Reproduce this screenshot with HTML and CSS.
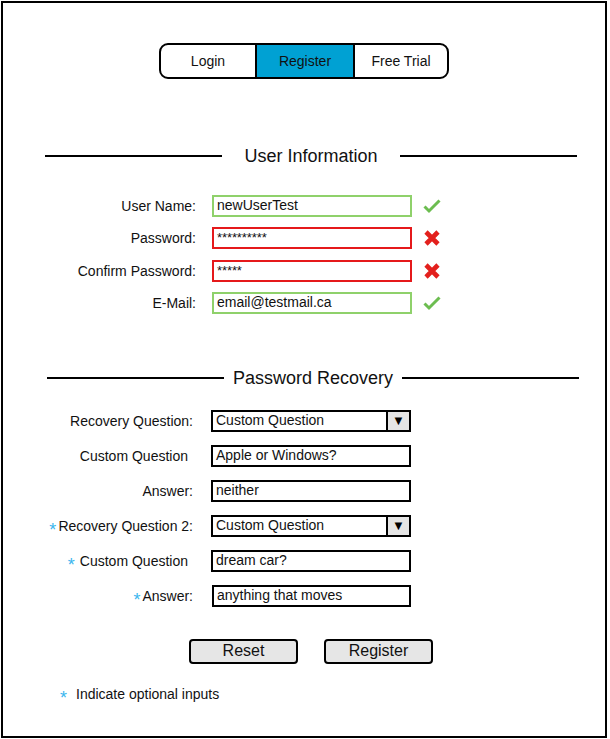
FILE: index.html
```html
<!DOCTYPE html>
<html>
<head>
<meta charset="utf-8">
<link rel="stylesheet" href="styles.css">
</head>
<body>
<div class="frame">
  <div class="tabs">
    <div class="tab tab-login">Login</div>
    <div class="tab tab-register">Register</div>
    <div class="tab tab-trial">Free Trial</div>
  </div>

  <div class="section-head head-user">
    <span class="rule"></span>
    <span class="head-text">User Information</span>
    <span class="rule"></span>
  </div>

  <div class="rows rows-user">
    <div class="row">
      <div class="label">User Name:</div>
      <div class="field ok">newUserTest</div>
      <svg class="icon" width="18" height="16" viewBox="0 0 18 16"><polyline points="1.5,8.5 6,13 16.5,2.5" fill="none" stroke="#6cbd50" stroke-width="3"/></svg>
    </div>
    <div class="row">
      <div class="label">Password:</div>
      <div class="field bad"><span class="stars">**********</span></div>
      <svg class="icon" width="18" height="16" viewBox="0 0 18 16"><path d="M3 2 L15 14 M15 2 L3 14" stroke="#e3201d" stroke-width="4.6"/></svg>
    </div>
    <div class="row">
      <div class="label">Confirm Password:</div>
      <div class="field bad"><span class="stars">*****</span></div>
      <svg class="icon" width="18" height="16" viewBox="0 0 18 16"><path d="M3 2 L15 14 M15 2 L3 14" stroke="#e3201d" stroke-width="4.6"/></svg>
    </div>
    <div class="row">
      <div class="label">E-Mail:</div>
      <div class="field ok">email@testmail.ca</div>
      <svg class="icon" width="18" height="16" viewBox="0 0 18 16"><polyline points="1.5,8.5 6,13 16.5,2.5" fill="none" stroke="#6cbd50" stroke-width="3"/></svg>
    </div>
  </div>

  <div class="section-head head-recovery">
    <span class="rule"></span>
    <span class="head-text">Password Recovery</span>
    <span class="rule"></span>
  </div>

  <div class="rows rows-recovery">
    <div class="row row-r">
      <div class="label">Recovery Question:</div>
      <div class="field plain select"><span class="sel-text">Custom Question</span><span class="sel-btn">&#9660;</span></div>
    </div>
    <div class="row row-r">
      <div class="label nocolon">Custom Question</div>
      <div class="field plain">Apple or Windows?</div>
    </div>
    <div class="row row-r">
      <div class="label">Answer:</div>
      <div class="field plain">neither</div>
    </div>
    <div class="row row-r">
      <div class="label"><span class="opt">*</span>Recovery Question 2:</div>
      <div class="field plain select"><span class="sel-text">Custom Question</span><span class="sel-btn">&#9660;</span></div>
    </div>
    <div class="row row-r">
      <div class="label nocolon"><span class="opt opt-sp">*</span>Custom Question</div>
      <div class="field plain">dream car?</div>
    </div>
    <div class="row row-r">
      <div class="label"><span class="opt">*</span>Answer:</div>
      <div class="field plain shift">anything that moves</div>
    </div>
  </div>

  <div class="actions">
    <div class="btn">Reset</div>
    <div class="btn">Register</div>
  </div>

  <div class="note"><span class="opt note-star">*</span>Indicate optional inputs</div>
</div>
</body>
</html>
```

FILE: styles.css
```css
html, body {
  margin: 0;
  padding: 0;
  background: #fff;
}
body {
  font-family: "Liberation Sans", Arial, sans-serif;
  color: #111;
  font-size: 14px;
}
.frame {
  box-sizing: border-box;
  margin: 1px 0 0 1px;
  width: 606px;
  height: 737px;
  border: 2px solid #000;
  padding-top: 40px;
}
.tabs {
  display: flex;
  box-sizing: border-box;
  width: 290px;
  height: 36px;
  margin: 0 auto;
  border: 2px solid #000;
  border-radius: 9px;
  overflow: hidden;
}
.tab {
  box-sizing: border-box;
  display: flex;
  align-items: center;
  justify-content: center;
  font-size: 14px;
  color: #111;
}
.tab-login { width: 94px; }
.tab-register {
  width: 100px;
  background: #00a1d3;
  border-left: 2px solid #000;
  border-right: 2px solid #000;
}
.tab-trial { width: 92px; }

.section-head {
  display: flex;
  align-items: center;
  width: 532px;
  height: 20px;
}
.head-user { margin: 67px 0 0 42px; }
.head-recovery { margin: 54px 0 0 44px; }
.rule {
  width: 177px;
  height: 2px;
  background: #000;
}
.head-text {
  flex: 1;
  text-align: center;
  font-size: 18px;
  line-height: 20px;
  color: #111;
}

.rows {
  display: flex;
  flex-direction: column;
}
.rows-user {
  margin-top: 29px;
  gap: 10.33px;
}
.rows-recovery {
  margin-top: 22px;
  gap: 13px;
}
.row {
  display: flex;
  align-items: center;
  height: 22px;
}
.label {
  box-sizing: border-box;
  width: 193px;
  text-align: right;
  white-space: nowrap;
  font-size: 14px;
  line-height: 16px;
  color: #111;
}
.row-r .label { width: 190px; }
.label.nocolon { padding-right: 5px; }
.field {
  box-sizing: border-box;
  width: 200px;
  height: 22px;
  margin-left: 16px;
  border: 2px solid #000;
  padding: 0 3px;
  font-size: 14px;
  line-height: 17px;
  white-space: nowrap;
  color: #111;
}
.row-r .field { margin-left: 18px; }
.row-r .field.shift { margin-left: 19px; width: 199px; }
.field.ok { border-color: #8fd16b; }
.field.bad { border-color: #e5191b; }
.stars {
  font-size: 13px;
  letter-spacing: -0.1px;
}
.icon {
  margin-left: 11px;
  flex: none;
}
.select {
  display: flex;
  padding-right: 0;
}
.sel-text { flex: 1; }
.sel-btn {
  box-sizing: border-box;
  width: 23px;
  height: 18px;
  background: #e5e5e5;
  border-left: 2px solid #000;
  font-size: 13px;
  line-height: 18px;
  text-align: center;
  color: #000;
}
.opt {
  color: #3bb6ee;
  font-size: 18px;
  line-height: 0;
  vertical-align: -5px;
  margin-right: 2px;
}
.opt-sp { margin-right: 5px; }

.actions {
  display: flex;
  gap: 26px;
  margin: 32px 0 0 186px;
}
.btn {
  box-sizing: border-box;
  width: 109px;
  height: 25px;
  background: #e6e6e6;
  border: 2px solid #000;
  border-radius: 4px;
  font-size: 16px;
  line-height: 20px;
  text-align: center;
  color: #111;
}
.note {
  margin: 22px 0 0 57px;
  font-size: 14px;
  line-height: 16px;
  color: #111;
}
.note-star { margin-right: 9px; }
```
